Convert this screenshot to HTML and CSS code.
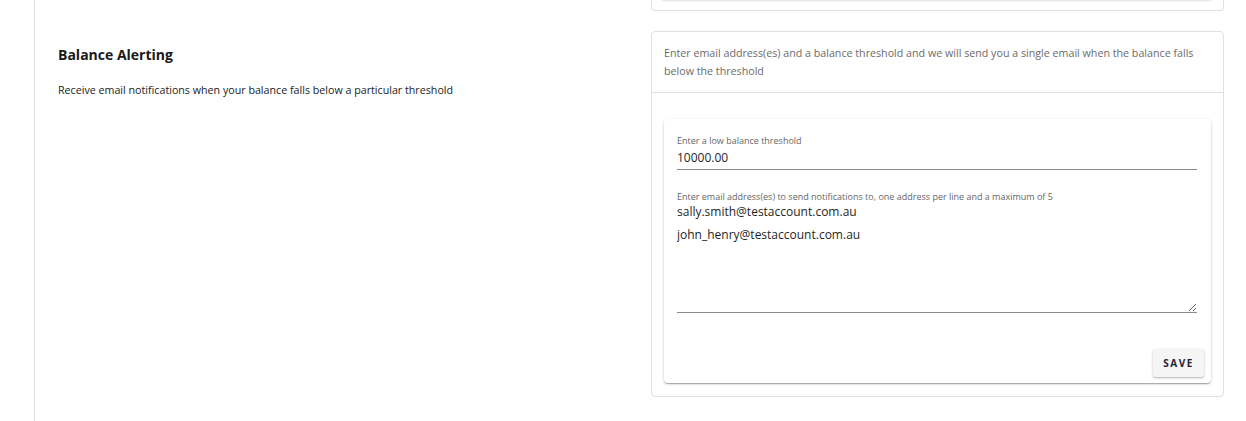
FILE: index.html
```html
<!DOCTYPE html>
<html lang="en">
<head>
  <meta charset="UTF-8" />
  <meta name="viewport" content="width=device-width, initial-scale=1.0" />
  <title>Balance Alerting</title>
  <link rel="stylesheet" href="styles.css">
</head>
<body>
  <div class="page">
    <div class="rail"></div>
    <div class="content">
      <div class="section">
        <div class="section-info">
          <h3>Balance Alerting</h3>
          <p>Receive email notifications when your balance falls below a particular threshold</p>
        </div>
        <div class="section-cards">
          <div class="card card-prev"></div>
          <div class="card">
            <div class="card-header">
              Enter email address(es) and a balance threshold and we will send you a single email when the balance falls below the threshold
            </div>
            <div class="card-body">
              <form class="paper">
                <div class="field">
                  <label for="threshold">Enter a low balance threshold</label>
                  <input type="text" id="threshold" value="10000.00" />
                </div>
                <div class="field">
                  <label for="emails">Enter email address(es) to send notifications to, one address per line and a maximum of 5</label>
                  <textarea id="emails" rows="4">sally.smith@testaccount.com.au
john_henry@testaccount.com.au</textarea>
                </div>
                <div class="actions">
                  <button type="button" class="save-btn">Save</button>
                </div>
              </form>
            </div>
          </div>
        </div>
      </div>
    </div>
  </div>
</body>
</html>
```

FILE: styles.css
```css
body {
  margin: 0;
  font-family: 'Open Sans', 'Noto Sans', sans-serif;
  background-color: #ffffff;
  color: #1f1f1f;
}

.page {
  display: flex;
  min-height: 421px;
}

.rail {
  width: 34px;
  border-right: 1px solid #dcdcdc;
  flex-shrink: 0;
}

.content {
  flex: 1;
  padding: 0 22px 0 23px;
}

.section {
  display: flex;
}

.section-info {
  width: 593px;
  padding-top: 45px;
}

.section-info h3 {
  margin: 0;
  font-size: 14px;
  font-weight: 700;
  line-height: 20px;
  color: #1a1a1a;
}

.section-info p {
  margin: 18px 0 0;
  font-size: 10.7px;
  line-height: 14px;
  color: #222;
}

.section-cards {
  flex: 1;
}

.card {
  border: 1px solid #e0e0e0;
  border-radius: 4px;
  background-color: #fff;
}

.card-prev {
  height: 10px;
  border-top: none;
  border-radius: 0 0 4px 4px;
  margin-bottom: 20px;
  position: relative;
}

.card-prev::before {
  content: "";
  position: absolute;
  left: 8px;
  right: 10px;
  top: -4px;
  height: 4px;
  border-radius: 0 0 4px 4px;
  box-shadow: 0 1px 2px rgba(0,0,0,0.12);
}

.card-header {
  padding: 12px 12px 12px;
  font-size: 10.7px;
  line-height: 18px;
  color: #6b6b6b;
  border-bottom: 1px solid #e0e0e0;
}

.card-body {
  padding: 26px 12px 13px;
}

.paper {
  margin: 0;
  padding: 17px 14px 6px 13px;
  border-radius: 4px;
  background-color: #fff;
  box-shadow: 0 1px 3px rgba(0,0,0,0.2), 0 1px 1px rgba(0,0,0,0.14), 0 2px 1px -1px rgba(0,0,0,0.12);
}

.field {
  display: flex;
  flex-direction: column;
  margin-bottom: 22px;
}

.field label {
  font-size: 9px;
  line-height: 10px;
  color: #666;
}

.field input,
.field textarea {
  font-family: inherit;
  font-size: 12px;
  color: #1f1f1f;
  border: none;
  border-bottom: 1px solid #8a8a8a;
  outline: none;
  padding: 0;
  margin: 0;
  background: transparent;
}

.field input {
  height: 24px;
  line-height: 23px;
  box-sizing: border-box;
}

.field textarea {
  line-height: 23px;
  height: 113px;
  margin-top: -2px;
  box-sizing: border-box;
  resize: vertical;
}

.actions {
  display: flex;
  justify-content: flex-end;
  margin-top: 36px;
  margin-right: -7px;
}

.save-btn {
  font-family: inherit;
  font-size: 10px;
  font-weight: 700;
  letter-spacing: 1.5px;
  text-transform: uppercase;
  color: #1e2230;
  background-color: #f5f5f5;
  border: none;
  border-radius: 3px;
  width: 51px;
  height: 28px;
  padding: 0;
  cursor: pointer;
  box-shadow: 0 1px 3px rgba(0,0,0,0.22), 0 1px 1px rgba(0,0,0,0.1);
}
```
